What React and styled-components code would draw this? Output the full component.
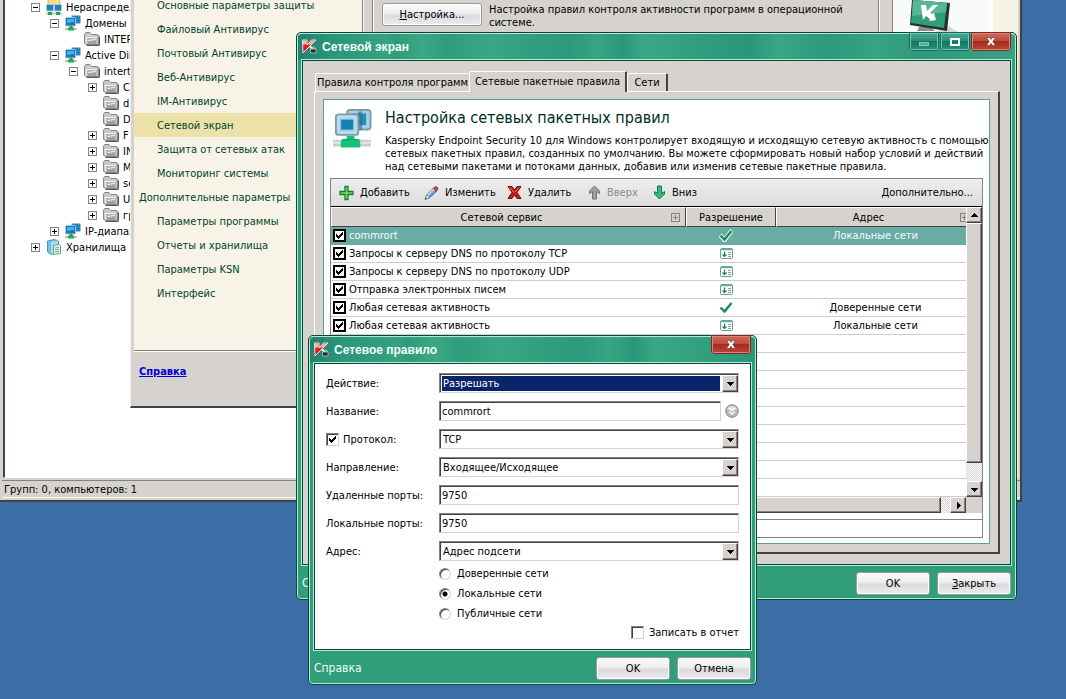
import React from "react";
import styled, { createGlobalStyle, css } from "styled-components";

const c = {
  face: "#d6d3ce",
  dark: "#424242",
  mid: "#848284",
  green: "#319e7b",
  edge: "#0a4638",
  light: "#b5ecd0",
};

const Global = createGlobalStyle`
  * { box-sizing: border-box; }
  html, body { margin: 0; height: 100%; background: #3a6ea5; }
  body { overflow: hidden; }
  body, button, input, select {
    font-family: "DejaVu Sans Condensed", Tahoma, "DejaVu Sans", sans-serif;
    font-size: 11px;
    line-height: 13px;
    color: #000;
  }
  ul { list-style: none; margin: 0; padding: 0; }
`;

const Desktop = styled.div`
  position: relative;
  min-height: 100vh;
  overflow: hidden;
  background: #3a6ea5;
`;

const raised = css`
  border: 1px solid;
  border-color: #fff ${c.dark} ${c.dark} #fff;
  box-shadow: inset -1px -1px 0 ${c.mid};
`;

const sunken = css`
  border: 1px solid;
  border-color: ${c.mid} ${c.face} ${c.face} ${c.mid};
  box-shadow: inset 1px 1px 0 ${c.dark};
`;

/* ---------- console window ---------- */

const Console = styled.section`
  position: absolute;
  top: -8px;
  left: 0;
  right: 44px;
  display: flex;
  flex-direction: column;
  background: ${c.face};
  border-right: 2px solid ${c.dark};
  border-bottom: 2px solid ${c.dark};
`;

const ConsoleBody = styled.div`
  display: flex;
  height: 486px;
  margin: 0 2px 0 3px;
  border-left: 2px solid ${c.dark};
  border-bottom: 1px solid #fff;
  background: #fff;
`;

const Tree = styled.ul`
  flex: 1;
  padding-top: 7px;
`;

const TreeItem = styled.li`
  display: flex;
  align-items: center;
  height: 16px;
  padding-left: ${(p) => 26 + p.$level * 19}px;
  white-space: nowrap;
`;

const Expander = styled.span`
  display: flex;
  width: 9px;
  height: 9px;
  margin-right: 6px;
  visibility: ${(p) => (p.$hidden ? "hidden" : "visible")};
`;

const TreeIcon = styled.span`
  display: flex;
  width: 16px;
  margin-right: 4px;
`;

const SidePane = styled.aside`
  width: 27px;
  background: #f7f3e4;
  border-left: 2px solid #fffdf2;
`;

const StatusBar = styled.footer`
  height: 18px;
  margin: 2px 0 2px 2px;
  padding: 2px;
  border-top: 1px solid ${c.mid};
  border-bottom: 1px solid #fff;
`;

/* ---------- policy properties window ---------- */

const Policy = styled.section`
  position: absolute;
  top: -8px;
  left: 130px;
  right: 76px;
  display: grid;
  grid-template-columns: 229px 1fr;
  padding-left: 3px;
  background: ${c.face};
  border-left: 1px solid #f4f2ee;
  border-bottom: 2px solid ${c.dark};
`;

const Nav = styled.nav`
  padding-top: 1px;
  height: 359px;
  background: #f7f3e6;
  border-right: 1px solid ${c.mid};
  border-bottom: 1px solid ${c.mid};
  box-shadow: 0 1px 0 #fff, 1px 0 0 #fff;
`;

const NavItem = styled.a`
  display: block;
  height: 24px;
  padding: 6px 0 0 ${(p) => (p.$root ? 5 : 23)}px;
  color: #00452f;
  text-decoration: none;
  white-space: nowrap;
  background: ${(p) => (p.$active ? "#ece1a9" : "transparent")};
`;

const HelpLink = styled.a`
  grid-column: 1;
  height: 55px;
  padding: 14px 0 0 5px;
  font-weight: bold;
  color: #0000d8;
`;

const Settings = styled.div`
  display: grid;
  grid-template-columns: 100px 1fr;
  column-gap: 7px;
  align-items: start;
  margin: 0 0 0 9px;
  padding: 11px 112px 0 9px;
  border-left: 1px solid ${c.mid};
  position: relative;
  box-shadow: inset 1px 0 0 #fff;
`;

const SettingsText = styled.p`
  margin: 0;
  white-space: nowrap;
`;

const Banner = styled.div`
  position: absolute;
  top: 0;
  right: 0;
  width: 112px;
  height: 60px;
  padding-left: 13px;
  border-left: 1px solid ${c.mid};
  box-shadow: inset 1px 0 0 #fff;
`;

const BannerArt = styled.div`
  height: 100%;
  padding: 8px 0 0 9px;
  background: #f9fbf8;
  border-left: 1px solid ${c.mid};
`;

/* ---------- green framed windows ---------- */

const Frame = styled.section`
  position: absolute;
  display: flex;
  flex-direction: column;
  padding: 0 5px;
  border: 1px solid ${c.edge};
  border-radius: 5px;
  box-shadow: inset 0 0 0 1px ${c.light};
  background: ${c.green};
`;

const FirewallFrame = styled(Frame)`
  top: 32px;
  left: 296px;
  right: 49px;
`;

const RuleFrame = styled(Frame)`
  top: 335px;
  left: 308px;
  right: 309px;
`;

const TitleBar = styled.header`
  display: flex;
  align-items: flex-start;
  height: 27px;
  margin: 0 -4px;
  padding-left: 4px;
  border-top: 1px solid ${c.light};
  border-radius: 4px 4px 0 0;
  background: linear-gradient(
    90deg,
    #22806f 0, #2b947a 30px, #35a281 90px, #2f9b7b 96px, #3ba785 125px,
    #319c7d 150px, #3aa684 190px, #2d987b 270px, #38a483 300px, #2c967a 325px,
    #3ba785 345px, #329e7e 400px, #2b957a 450px, #3aa685 480px, #2e997b 530px,
    #38a483 580px, #2f9a7b 620px, #37a181 100%
  );
`;

const Title = styled.h1`
  flex: 1;
  margin: 0;
  padding: 5px 0 0 5px;
  font: bold 12px/16px "Liberation Sans", Arial, sans-serif;
  color: #f2fff8;
`;

const AppIcon = styled.span`
  display: flex;
  padding-top: 5px;
`;

const CaptionButtons = styled.div`
  display: flex;
  margin: -2px 4px 0 0;
  gap: 1px;
`;

const CaptionButton = styled.button`
  display: flex;
  align-items: center;
  justify-content: center;
  width: ${(p) => (p.$close ? 40 : 30)}px;
  height: 19px;
  padding: 0;
  border: 1px solid ${(p) => (p.$close ? "#e3a49b" : "#86c9b6")};
  border-radius: 0 0 3px 3px;
  outline: 1px solid ${(p) => (p.$close ? "#7a2c24" : "#17675a")};
  outline-offset: -1px;
  box-shadow: inset 0 0 0 1px ${(p) => (p.$close ? "#d98679" : "#7cc5b0")};
  background: ${(p) =>
    p.$close
      ? "linear-gradient(#d0695b 0, #c04b3b 45%, #a62a1a 50%, #b84736 100%)"
      : "linear-gradient(#4aa892 0, #2f8f7b 45%, #0f7566 50%, #2c917c 100%)"};
`;

const Client = styled.div`
  border: 1px solid ${c.edge};
  box-shadow: 0 0 0 1px ${c.light};
  background: ${(p) => (p.$white ? "#fff" : c.face)};
`;

const FrameFooter = styled.footer`
  display: flex;
  align-items: center;
  gap: 7px;
  height: 34px;
  padding-top: 2px;
`;

const FooterLink = styled.a`
  flex: 1;
  color: #eafff4;
  font-size: 12px;
  text-decoration: none;
`;

const PushButton = styled.button`
  height: 23px;
  min-width: 74px;
  padding: 0 4px;
  border: 1px solid #9a9a9a;
  border-radius: 3px;
  box-shadow: inset 0 0 0 1px #fff;
  background: linear-gradient(#fafafa 0, #ececee 48%, #d9d9dc 52%, #ececec 100%);
`;

/* ---------- firewall content ---------- */

const FirewallBody = styled.div`
  padding: 10px 10px 10px 11px;
`;

const Tabs = styled.div`
  display: flex;
  align-items: flex-end;
  height: 20px;
  padding-left: 1px;
`;

const Tab = styled.button`
  height: ${(p) => (p.$active ? 21 : 18)}px;
  margin-bottom: ${(p) => (p.$active ? -1 : 0)}px;
  position: relative;
  width: ${(p) => p.$w}px;
  padding: 0 0 ${(p) => (p.$active ? 2 : 0)}px;
  border: 1px solid #fff;
  border-bottom: 0;
  border-right: ${(p) => (p.$first ? "0" : `2px solid ${c.dark}`)};
  border-radius: 2px 2px 0 0;
  background: ${c.face};
  white-space: nowrap;
`;

const TabPanel = styled.div`
  padding: 7px 8px 8px;
  border: 1px solid #fff;
  border-right: 2px solid ${c.dark};
  border-bottom: 2px solid ${c.dark};
`;

const Sheet = styled.div`
  padding: 7px 6px 5px;
  background: #fff;
  border: 1px solid #629e8e;
`;

const Intro = styled.div`
  display: flex;
  gap: 13px;
  height: 71px;
  padding-left: 2px;
`;

const IntroIcon = styled.span`
  display: flex;
  flex: none;
  width: 40px;
  padding-top: 1px;
`;

const Heading = styled.h2`
  margin: 0 0 6px;
  font-weight: normal;
  font-size: 16px;
  line-height: 21px;
  color: #002d27;
`;

const IntroText = styled.p`
  margin: 0;
  white-space: nowrap;
`;

const RulesBox = styled.div`
  border: 1px solid ${c.mid};
`;

const Toolbar = styled.div`
  display: flex;
  align-items: center;
  height: 28px;
  padding: 0 9px 0 8px;
  border-bottom: 1px solid #000;
  background: linear-gradient(#efeeef, #dcdcdd);
`;

const ToolButton = styled.button`
  display: flex;
  align-items: center;
  gap: 6px;
  width: ${(p) => (p.$w ? `${p.$w}px` : "auto")};
  margin-left: ${(p) => (p.$last ? "auto" : 0)};
  padding: 0;
  border: 0;
  background: none;
  white-space: nowrap;
  &:disabled { color: #8c8c8c; }
`;

const GridArea = styled.div`
  display: grid;
  grid-template-columns: 1fr 16px;
`;

const GridClip = styled.div`
  overflow: hidden;
`;

const Rules = styled.table`
  width: calc(100% + 9px);
  table-layout: fixed;
  border-collapse: separate;
  border-spacing: 0;
`;

const Th = styled.th`
  width: ${(p) => (p.$w ? `${p.$w}px` : "auto")};
  height: 20px;
  padding: 0;
  font-weight: normal;
  background: ${c.face};
  border: 1px solid;
  border-color: #fff ${c.dark} ${c.dark} #fff;
`;

const ThInner = styled.span`
  display: flex;
  align-items: center;
  padding-right: ${(p) => (p.$plus ? 5 : 0)}px;
`;

const ThLabel = styled.span`
  flex: 1;
  text-align: center;
`;

const Tr = styled.tr`
  color: ${(p) => (p.$selected ? "#f0fffb" : "#000")};
  background: ${(p) => (p.$selected ? "#6aaca4" : "#fff")};
`;

const Td = styled.td`
  height: 18px;
  padding: 0 ${(p) => (p.$icon ? 10 : 0)}px 0 0;
  text-align: ${(p) => (p.$center ? "center" : "left")};
  border-bottom: 1px solid ${(p) => (p.$selected ? "#6aaca4" : "#cecece")};
  svg { display: block; margin: 0 auto; }
`;

const RowLabel = styled.label`
  display: flex;
  align-items: center;
  gap: 3px;
  padding-left: 2px;
`;

const CheckShell = styled.span`
  position: relative;
  display: flex;
  flex: none;
  svg { position: absolute; left: 3px; top: 3px; pointer-events: none; display: none; }
  input:checked + svg { display: block; }
`;

const CheckInput = styled.input`
  appearance: none;
  width: 13px;
  height: 13px;
  margin: 0;
  background: #fff;
  ${(p) => (p.$bold ? css`border: 2px solid #000;` : sunken)}
`;

const VScroll = styled.div`
  display: flex;
  flex-direction: column;
  background: #ebe9e6;
`;

const HScroll = styled.div`
  display: flex;
  height: 16px;
  background: #ebe9e6;
`;

const Thumb = styled.div`
  ${raised}
  flex: 1;
  background: ${c.face};
`;

const Track = styled.div`
  width: ${(p) => (p.$v ? 16 : 9)}px;
  height: ${(p) => (p.$v ? 18 : 16)}px;
  background: repeating-conic-gradient(#fff 0 25%, ${c.face} 0 50%) 0 0 / 2px 2px;
`;

const ScrollButton = styled.button`
  ${raised}
  display: flex;
  align-items: center;
  justify-content: center;
  flex: none;
  width: 16px;
  height: 16px;
  padding: 0;
  background: ${c.face};
`;

const Corner = styled.div`
  background: ${c.face};
`;

const Details = styled.div`
  height: 18px;
  margin-top: 6px;
  border-top: 1px solid ${c.mid};
`;

/* ---------- rule form ---------- */

const Form = styled.form`
  display: flex;
  flex-direction: column;
  gap: 8px;
  height: 285px;
  padding: 9px 11px 0;
`;

const Field = styled.div`
  display: grid;
  grid-template-columns: 113px 1fr;
  align-items: center;
  height: 20px;
`;

const FieldLabel = styled.label`
  display: flex;
  align-items: center;
  gap: 4px;
`;

const TextBox = styled.input`
  ${sunken}
  width: 100%;
  height: 20px;
  padding: 0 2px;
  background: #fff;
`;

const WithHint = styled.div`
  display: flex;
  align-items: center;
  gap: 4px;
`;

const HintButton = styled.button`
  display: flex;
  flex: none;
  padding: 0;
  border: 0;
  background: none;
`;

const SelectShell = styled.div`
  ${sunken}
  position: relative;
  display: flex;
  height: 20px;
  padding: 2px 1px 1px 2px;
  background: #fff;
`;

const Select = styled.select`
  appearance: none;
  flex: 1;
  min-width: 0;
  margin-right: 17px;
  padding: 0 1px;
  border: 0;
  border-radius: 0;
  outline: 0;
  color: ${(p) => (p.$selected ? "#fff" : "#000")};
  background: ${(p) => (p.$selected ? "#08246b" : "#fff")};
`;

const DropMark = styled.span`
  ${raised}
  position: absolute;
  top: 1px;
  right: 0;
  display: flex;
  align-items: center;
  justify-content: center;
  width: 16px;
  height: 17px;
  background: ${c.face};
  pointer-events: none;
`;

const Radios = styled.div`
  display: flex;
  flex-direction: column;
  gap: 7px;
  margin: -2px 0 -2px 113px;
`;

const RadioLabel = styled.label`
  display: flex;
  align-items: center;
  gap: 6px;
  height: 13px;
`;

const Radio = styled.input`
  appearance: none;
  width: 12px;
  height: 12px;
  margin: 0;
  border: 1px solid;
  border-color: ${c.mid} ${c.face} ${c.face} ${c.mid};
  border-radius: 50%;
  box-shadow: inset 1px 1px 0 ${c.dark};
  background: #fff;
  &:checked { background: radial-gradient(circle, #000 0 2px, #fff 3px); }
`;

const ReportLabel = styled.label`
  display: flex;
  align-items: center;
  align-self: flex-end;
  gap: 5px;
`;

/* ---------- drawings ---------- */

const Tick = () => (
  <svg width="7" height="7" viewBox="0 0 7 7" shapeRendering="crispEdges">
    <path d="M0 2h1v1h1v1h1v-1h1v-1h1v-1h1v-1h1v3h-1v1h-1v1h-1v1h-1v1h-1v-1h-1v-1h-1z" fill="#000" />
  </svg>
);

const Arrow = ({ dir }) => (
  <svg width="7" height="7" viewBox="0 0 7 7" shapeRendering="crispEdges">
    <path
      d={{ up: "M0 5h7v-1h-1v-1h-1v-1h-1v-1h-1v1h-1v1h-1v1h-1z", down: "M0 2h7v1h-1v1h-1v1h-1v1h-1v-1h-1v-1h-1v-1h-1z", right: "M2 0h1v1h1v1h1v1h1v1h-1v1h-1v1h-1v1h-1z" }[dir]}
      fill="#000"
    />
  </svg>
);

const PlusMinus = ({ open }) => (
  <svg width="9" height="9" viewBox="0 0 9 9" shapeRendering="crispEdges">
    <rect x=".5" y=".5" width="8" height="8" fill="#fff" stroke="#848284" />
    <path d={open ? "M2 4.500h5" : "M2 4.500h5M4.500 2v5"} stroke="#000" />
  </svg>
);

const FolderIcon = () => (
  <svg width="16" height="14" viewBox="0 0 16 14">
    <path d="M15 4l1 1v8l-1 1H3l-1-1h13z" fill="#5a5a5a" />
    <path d="M.5 3Q.5 1 2 .500L6 .500 8 2.500 13 2.500Q14.500 2.500 14.500 4V12.500H2L.5 11Z" fill="#c9c9c9" stroke="#868686" />
    <path d="M2.500 5.500h10.500v6.500H3.500z" fill="#b4b4b4" />
    <path d="M2.500 11V5.500h10M4.500 8.500l7.500-1" stroke="#f6f6f6" fill="none" />
    <path d="M4 9.500l8-1v3.500H4z" fill="#9f9f9f" />
  </svg>
);

const NetIcon = () => (
  <svg width="16" height="16" viewBox="0 0 16 16">
    <rect x="6.500" y=".5" width="9" height="8" rx="1" fill="#2582be" stroke="#9fbfd8" />
    <rect x=".5" y="2.500" width="10" height="8.500" rx="1" fill="#1578b8" stroke="#a9c8de" />
    <path d="M2 4h7v3L2 8z" fill="#4fb0e0" />
    <path d="M4.500 11h3v2h-3z" fill="#1f9b50" />
    <path d="M0 14h12" stroke="#b9c2c4" strokeWidth="2" />
    <path d="M3 14h6" stroke="#21a957" strokeWidth="3" />
  </svg>
);

const GroupIcon = () => (
  <svg width="16" height="16" viewBox="0 0 16 16">
    <path d="M2 0h11l1 3v6H2z" fill="#f5df8c" stroke="#dcb64e" />
    <rect x=".5" y="5.500" width="7" height="6.500" rx="1" fill="#2380bd" stroke="#a9c8de" />
    <rect x="8.500" y="5.500" width="7" height="6.500" rx="1" fill="#2380bd" stroke="#a9c8de" />
    <path d="M0 14.500h16" stroke="#bcc7c4" strokeWidth="2" />
    <path d="M2 14.500h4M10 14.500h4" stroke="#23a458" strokeWidth="3" />
  </svg>
);

const StorageIcon = () => (
  <svg width="16" height="16" viewBox="0 0 16 16">
    <path d="M1.500 2L8 .5 12.500 2v11L5 15.500 1.500 13z" fill="#79bfe0" stroke="#4b93b8" />
    <path d="M5 3l7-1.500V13l-7 2z" fill="#a9dcf0" />
    <path d="M7.500 6.500l6-1 1 1v8l-7 1z" fill="#e8f6ec" stroke="#6e9f92" />
    <path d="M9 9l4-.5M9 11l4-.5M9 13l4-.5" stroke="#62ab8b" />
  </svg>
);

const KLogo = () => (
  <svg width="15" height="15" viewBox="0 0 15 15">
    <path d="M.5 1H5v5l4.500-5H14L7.500 7.500 1 14z" fill="#e11d1d" stroke="#f4f4f4" strokeWidth=".9" />
    <path d="M1 1.500h3.500V5L1 6zM9.500 1.500H13L9 5.500 6 6z" fill="#f8b5b2" />
    <path d="M7.500 7l3.500 3" stroke="#f4f4f4" strokeWidth="2" />
    <path d="M10 10V9q1.500-2 3 0v1" fill="none" stroke="#d5d5d5" />
    <path d="M8.500 10H14v4H8.500z" fill="#20302b" stroke="#c8d6d0" strokeWidth=".7" />
  </svg>
);

const Monitors = () => (
  <svg width="41" height="42" viewBox="0 0 41 42">
    <rect x="15.500" y="1.500" width="24" height="20" rx="3" fill="#a8d0e4" stroke="#7c9dae" strokeWidth="2" />
    <rect x="20" y="5" width="15" height="12" fill="#2a8eb8" />
    <path d="M27 3h4v19h-8z" fill="#2f6a86" opacity=".6" />
    <rect x="4" y="6" width="23" height="21" rx="3" fill="#b9dcec" stroke="#7d9dad" strokeWidth="2" />
    <rect x="9" y="11" width="13" height="11" fill="#1580b4" stroke="#7fbdd8" />
    <path d="M1 32h39v7H1z" fill="#c9cdcd" />
    <path d="M1 34h39v2H1z" fill="#e6e8e8" />
    <path d="M15 28h8v3c4 0 6 1 6 4v5H9v-5c0-3 2-4 6-4z" fill="#18c378" />
    <path d="M10 32h18" stroke="#0fa764" />
  </svg>
);

const AddIcon = () => (
  <svg width="15" height="16" viewBox="0 0 15 16">
    <path d="M6 1.500h3v5h5v3h-5v5h-3v-5h-5v-3h5z" fill="#74d874" stroke="#13802c" strokeWidth="1.300" />
  </svg>
);

const EditIcon = () => (
  <svg width="15" height="16" viewBox="0 0 16 16">
    <path d="M1.500 14.500L3 10 10.500 2.500 14 5.500 6 13z" fill="#5aa4e0" stroke="#2d5c94" />
    <path d="M3.500 11L11 3.500" stroke="#cfe6fa" strokeWidth="1.500" />
    <path d="M10 3l2-2q3 0 3 3l-2 2z" fill="#d83a32" stroke="#8c2c2a" strokeWidth=".6" />
    <path d="M1 15l2-5 3 3z" fill="#f3dcae" stroke="#5f7890" strokeWidth=".6" />
    <path d="M1 15l1-2 1 1z" fill="#222" />
  </svg>
);

const DeleteIcon = () => (
  <svg width="15" height="15" viewBox="0 0 15 15">
    <path d="M1 1.500h4l2.500 3.500L10 1.500h4l-4 6 4 6h-4L7.500 10 5 13.500H1l4-6z" fill="#c41818" stroke="#7f0a0a" />
    <path d="M2.500 2.500l4.500 5M12 2.500L8.500 7" stroke="#f27a72" />
  </svg>
);

const MoveIcon = ({ down, color, line }) => (
  <svg width="13" height="15" viewBox="0 0 13 15">
    <path
      d="M6.500 1L11.500 6v2.500L8.500 6.500V14h-4V6.500L1.500 8.500V6z"
      transform={down ? "rotate(180 6.500 7.500)" : undefined}
      fill={color}
      stroke={line}
    />
  </svg>
);

const AllowIcon = ({ outlined }) => (
  <svg width="14" height="13" viewBox="0 0 14 13">
    {outlined && <path d="M1 6l4.500 5L13 1.500" fill="none" stroke="#d9f5e8" strokeWidth="4.500" />}
    <path d="M1.500 6.500l4 4L12.500 2" fill="none" stroke="#128a68" strokeWidth="2.400" />
  </svg>
);

const AppRuleIcon = () => (
  <svg width="13" height="11" viewBox="0 0 13 11">
    <rect x=".5" y=".5" width="12" height="10" rx="1" fill="#fff" stroke="#6f9b90" />
    <path d="M1 1.500h11" stroke="#5eb29a" strokeWidth="1.500" />
    <path d="M4.500 3.500v5M2.500 6.500l2 2 2-2" fill="none" stroke="#16805f" strokeWidth="1.200" />
    <path d="M8 4.500h3M8 6.500h3M8 8.500h3" stroke="#7ba79c" />
  </svg>
);

const HeaderPlus = () => (
  <svg width="9" height="9" viewBox="0 0 9 9" shapeRendering="crispEdges">
    <path d="M.5.5h8v8h-8zM2 4.500h5M4.500 2v5" fill="none" stroke="#848284" />
  </svg>
);

const HintIcon = () => (
  <svg width="14" height="14" viewBox="0 0 14 14">
    <circle cx="7" cy="7" r="6.300" fill="#b6b6ba" stroke="#88888c" />
    <path d="M2 6Q3 2 7 2T12 6z" fill="#dcdcde" />
    <path d="M4 4l3 2.500L10 4M4 7.500L7 10l3-2.500" fill="none" stroke="#fff" strokeWidth="1.600" />
  </svg>
);

const CloseMark = () => (
  <svg width="10" height="9" viewBox="0 0 10 9">
    <path d="M.5.5h3L5 2.500 6.500.5h3L6.800 4.500l2.700 4h-3L5 6.300 3.500 8.500h-3l2.700-4z" fill="#fff" stroke="#6d3530" strokeWidth=".6" />
  </svg>
);

const MaxMark = () => (
  <svg width="10" height="8" viewBox="0 0 10 8">
    <rect x="1" y="1" width="8" height="6" fill="none" stroke="#fff" strokeWidth="2" />
  </svg>
);

const MinMark = () => (
  <svg width="10" height="8" viewBox="0 0 10 8">
    <rect x=".5" y="4.500" width="9" height="3" fill="#58ab98" stroke="#9bd3c2" strokeWidth=".8" />
  </svg>
);

const BannerMonitor = () => (
  <svg width="80" height="34" viewBox="0 0 80 34">
    <path d="M46 26l14 8H30z" fill="#d5d8d5" />
    <path d="M17 27h12l4 4H15z" fill="#8b938f" />
    <path d="M10 0L48 3 45 31 8 25z" fill="#26302d" />
    <path d="M11 0L45 3 42 28 9 23z" fill="#2f9e7b" />
    <path d="M11 0L45 3 44 12 10 16z" fill="#55b796" />
    <path d="M19 5h5l1 6 6-6h5l-8 8 2 1 2-1 2 7-7 1 1-2-4-3-3 4z" fill="#fff" />
  </svg>
);

/* ---------- data ---------- */

const tree = [
  [0, "open", GroupIcon, "Нераспределенные"],
  [1, "open", NetIcon, "Домены"],
  [2, null, FolderIcon, "INTERTRUST"],
  [1, "open", NetIcon, "Active Directory"],
  [2, "open", FolderIcon, "intertrust"],
  [3, "closed", FolderIcon, "C"],
  [3, null, FolderIcon, "d"],
  [3, null, FolderIcon, "D"],
  [3, "closed", FolderIcon, "F"],
  [3, "closed", FolderIcon, "IN"],
  [3, "closed", FolderIcon, "M"],
  [3, "closed", FolderIcon, "se"],
  [3, "closed", FolderIcon, "U"],
  [3, "closed", FolderIcon, "гр"],
  [1, "closed", NetIcon, "IP-диапазоны"],
  [0, "closed", StorageIcon, "Хранилища"],
];

const nav = [
  ["Основные параметры защиты"],
  ["Файловый Антивирус"],
  ["Почтовый Антивирус"],
  ["Веб-Антивирус"],
  ["IM-Антивирус"],
  ["Сетевой экран", "active"],
  ["Защита от сетевых атак"],
  ["Мониторинг системы"],
  ["Дополнительные параметры", "root"],
  ["Параметры программы"],
  ["Отчеты и хранилища"],
  ["Параметры KSN"],
  ["Интерфейс"],
];

const rules = [
  ["commrort", "allow", "Локальные сети"],
  ["Запросы к серверу DNS по протоколу TCP", "app", ""],
  ["Запросы к серверу DNS по протоколу UDP", "app", ""],
  ["Отправка электронных писем", "app", ""],
  ["Любая сетевая активность", "allow", "Доверенные сети"],
  ["Любая сетевая активность", "app", "Локальные сети"],
];

const emptyRows = Array.from({ length: 9 }, (_, i) => i);

/* ---------- parts ---------- */

const Check = ({ bold, ...rest }) => (
  <CheckShell>
    <CheckInput type="checkbox" $bold={bold} {...rest} />
    <Tick />
  </CheckShell>
);

const Drop = ({ id, value, selected, label }) => (
  <SelectShell>
    <Select id={id} $selected={selected} defaultValue={value} aria-label={label}>
      <option>{value}</option>
    </Select>
    <DropMark>
      <Arrow dir="down" />
    </DropMark>
  </SelectShell>
);

const CloseButton = () => (
  <CaptionButton $close type="button" aria-label="Закрыть">
    <CloseMark />
  </CaptionButton>
);

const ConsoleWindow = () => (
  <Console>
    <ConsoleBody>
      <Tree>
        {tree.map(([level, state, Icon, text], i) => (
          <TreeItem key={i} $level={level}>
            <Expander $hidden={!state}>
              <PlusMinus open={state === "open"} />
            </Expander>
            <TreeIcon>
              <Icon />
            </TreeIcon>
            {text}
          </TreeItem>
        ))}
      </Tree>
      <SidePane />
    </ConsoleBody>
    <StatusBar>Групп: 0, компьютеров: 1</StatusBar>
  </Console>
);

const PolicyWindow = () => (
  <Policy>
    <Nav>
      {nav.map(([text, kind]) => (
        <NavItem key={text} href="#" $active={kind === "active"} $root={kind === "root"}>
          {text}
        </NavItem>
      ))}
    </Nav>
    <Settings>
      <PushButton type="button">
        <u>Н</u>астройка...
      </PushButton>
      <SettingsText>
        Настройка правил контроля активности программ в операционной
        <br />
        системе.
      </SettingsText>
      <Banner>
        <BannerArt>
          <BannerMonitor />
        </BannerArt>
      </Banner>
    </Settings>
    <HelpLink href="#">Справка</HelpLink>
  </Policy>
);

const RulesTable = () => (
  <Rules>
    <thead>
      <tr>
        <Th $w={355}>
          <ThInner $plus>
            <ThLabel>Сетевой сервис</ThLabel>
            <HeaderPlus />
          </ThInner>
        </Th>
        <Th $w={90}>Разрешение</Th>
        <Th>
          <ThInner $plus>
            <ThLabel>Адрес</ThLabel>
            <HeaderPlus />
          </ThInner>
        </Th>
      </tr>
    </thead>
    <tbody>
      {rules.map(([name, action, address], i) => (
        <Tr key={i} $selected={i === 0}>
          <Td $selected={i === 0}>
            <RowLabel>
              <Check bold defaultChecked />
              {name}
            </RowLabel>
          </Td>
          <Td $center $icon $selected={i === 0}>
            {action === "allow" ? <AllowIcon outlined={i === 0} /> : <AppRuleIcon />}
          </Td>
          <Td $center $selected={i === 0}>
            {address}
          </Td>
        </Tr>
      ))}
      {emptyRows.map((i) => (
        <Tr key={i}>
          <Td colSpan={3} />
        </Tr>
      ))}
    </tbody>
  </Rules>
);

const FirewallWindow = () => (
  <FirewallFrame>
    <TitleBar>
      <AppIcon>
        <KLogo />
      </AppIcon>
      <Title>Сетевой экран</Title>
      <CaptionButtons>
        <CaptionButton type="button" aria-label="Свернуть">
          <MinMark />
        </CaptionButton>
        <CaptionButton type="button" aria-label="Развернуть">
          <MaxMark />
        </CaptionButton>
        <CloseButton />
      </CaptionButtons>
    </TitleBar>
    <Client>
      <FirewallBody>
        <Tabs>
          <Tab type="button" $w={154} $first>Правила контроля программ</Tab>
          <Tab type="button" $w={158} $active>Сетевые пакетные правила</Tab>
          <Tab type="button" $w={41}>Сети</Tab>
        </Tabs>
        <TabPanel>
          <Sheet>
            <Intro>
              <IntroIcon>
                <Monitors />
              </IntroIcon>
              <div>
                <Heading>Настройка сетевых пакетных правил</Heading>
                <IntroText>
                  Kaspersky Endpoint Security 10 для Windows контролирует входящую и исходящую сетевую активность с помощью
                  <br />
                  сетевых пакетных правил, созданных по умолчанию. Вы можете сформировать новый набор условий и действий
                  <br />
                  над сетевыми пакетами и потоками данных, добавив или изменив сетевые пакетные правила.
                </IntroText>
              </div>
            </Intro>
            <RulesBox>
              <Toolbar>
                <ToolButton type="button" $w={85}><AddIcon />Добавить</ToolButton>
                <ToolButton type="button" $w={83}><EditIcon />Изменить</ToolButton>
                <ToolButton type="button" $w={81}><DeleteIcon />Удалить</ToolButton>
                <ToolButton type="button" $w={65} disabled>
                  <MoveIcon color="#a0a0a0" line="#747474" />
                  Вверх
                </ToolButton>
                <ToolButton type="button">
                  <MoveIcon down color="#35bd78" line="#0d7d50" />
                  Вниз
                </ToolButton>
                <ToolButton type="button" $last>Дополнительно...</ToolButton>
              </Toolbar>
              <GridArea>
                <GridClip>
                  <RulesTable />
                </GridClip>
                <VScroll>
                  <ScrollButton type="button" aria-label="Вверх"><Arrow dir="up" /></ScrollButton>
                  <Thumb />
                  <Track $v />
                  <ScrollButton type="button" aria-label="Вниз"><Arrow dir="down" /></ScrollButton>
                </VScroll>
                <HScroll>
                  <Thumb />
                  <Track />
                  <ScrollButton type="button" aria-label="Вправо"><Arrow dir="right" /></ScrollButton>
                </HScroll>
                <Corner />
              </GridArea>
              <Details />
            </RulesBox>
          </Sheet>
        </TabPanel>
      </FirewallBody>
    </Client>
    <FrameFooter>
      <FooterLink href="#">Справка</FooterLink>
      <PushButton type="button">OK</PushButton>
      <PushButton type="button"><u>З</u>акрыть</PushButton>
    </FrameFooter>
  </FirewallFrame>
);

const RuleWindow = () => (
  <RuleFrame>
    <TitleBar>
      <AppIcon>
        <KLogo />
      </AppIcon>
      <Title>Сетевое правило</Title>
      <CaptionButtons>
        <CloseButton />
      </CaptionButtons>
    </TitleBar>
    <Client $white>
      <Form>
        <Field>
          <FieldLabel htmlFor="action">Действие:</FieldLabel>
          <Drop id="action" value="Разрешать" selected />
        </Field>
        <Field>
          <FieldLabel htmlFor="name">Название:</FieldLabel>
          <WithHint>
            <TextBox id="name" defaultValue="commrort" />
            <HintButton type="button" aria-label="Шаблоны"><HintIcon /></HintButton>
          </WithHint>
        </Field>
        <Field>
          <FieldLabel>
            <Check defaultChecked />
            Протокол:
          </FieldLabel>
          <Drop id="protocol" value="TCP" label="Протокол" />
        </Field>
        <Field>
          <FieldLabel htmlFor="direction">Направление:</FieldLabel>
          <Drop id="direction" value="Входящее/Исходящее" />
        </Field>
        <Field>
          <FieldLabel htmlFor="remote">Удаленные порты:</FieldLabel>
          <TextBox id="remote" defaultValue="9750" />
        </Field>
        <Field>
          <FieldLabel htmlFor="local">Локальные порты:</FieldLabel>
          <TextBox id="local" defaultValue="9750" />
        </Field>
        <Field>
          <FieldLabel htmlFor="address">Адрес:</FieldLabel>
          <Drop id="address" value="Адрес подсети" />
        </Field>
        <Radios>
          <RadioLabel><Radio type="radio" name="net" />Доверенные сети</RadioLabel>
          <RadioLabel><Radio type="radio" name="net" defaultChecked />Локальные сети</RadioLabel>
          <RadioLabel><Radio type="radio" name="net" />Публичные сети</RadioLabel>
        </Radios>
        <ReportLabel>
          <Check />
          Записать в отчет
        </ReportLabel>
      </Form>
    </Client>
    <FrameFooter>
      <FooterLink href="#">Справка</FooterLink>
      <PushButton type="button">OK</PushButton>
      <PushButton type="button">Отмена</PushButton>
    </FrameFooter>
  </RuleFrame>
);

export default function App() {
  return (
    <>
      <Global />
      <Desktop>
        <ConsoleWindow />
        <PolicyWindow />
        <FirewallWindow />
        <RuleWindow />
      </Desktop>
    </>
  );
}
